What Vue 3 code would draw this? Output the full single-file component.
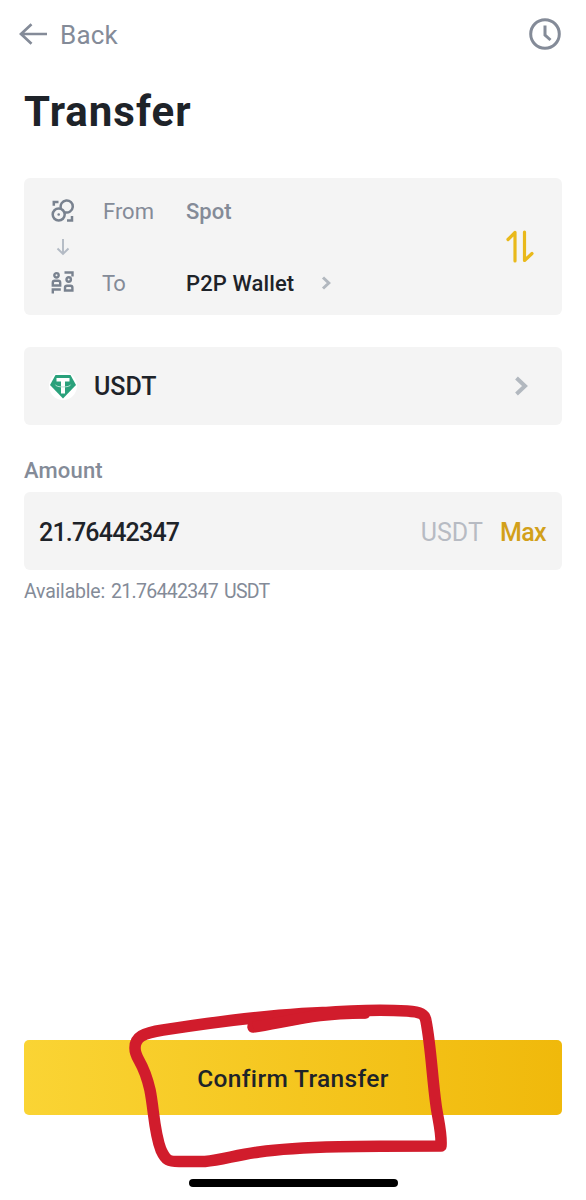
<script setup>
import { ref } from 'vue'

const amount = ref('21.76442347')
const coin = ref('USDT')
</script>

<template>
  <main class="page">
    <header class="top">
      <button class="back">
        <svg width="29" height="24" viewBox="0 0 29 24"><path d="M28 12H2M12.500 2.200L2 12l10.500 9.800" /></svg>
        <span class="t-back">Back</span>
      </button>
      <svg class="clock" width="32" height="32" viewBox="0 0 32 32"><circle cx="16" cy="16" r="14.300" /><path d="M16 7.500V17l5.500 5" /></svg>
    </header>

    <h1><span class="t-title">Transfer</span></h1>

    <section class="card route">
      <div class="accounts">
        <div class="row">
          <svg class="ico" width="24" height="24" viewBox="0 0 24 24">
            <circle cx="7.700" cy="15.500" r="6" /><path d="M9.900 9.200A6.050 6.050 0 1 1 14 13.300M2.800 6.800V3h4.700M21 17v4.500h-5" /><circle class="dot" cx="7.700" cy="15.500" r="1.300" />
          </svg>
          <span class="label t-from">From</span>
          <span class="value muted t-spot">Spot</span>
        </div>
        <svg class="down" width="14" height="18" viewBox="0 0 14 18"><path d="M7 1v15M1.500 10.500L7 16l5.500-5.500" /></svg>
        <div class="row">
          <svg class="ico people" width="24" height="24" viewBox="0 0 24 24">
            <circle cx="5.500" cy="4.300" r="2.200" /><path d="M1.800 14.500v-2.800c0-1.300.8-2 2-2h3.400c1.200 0 2 .7 2 2v2.800zM1.800 22.500v-4h8" />
            <circle cx="17.700" cy="8.500" r="2.200" /><path d="M14 19.500v-2.800c0-1.300.8-2 2-2h3.400c1.200 0 2 .7 2 2v2.800zM13.500 1.500h8v4" />
          </svg>
          <span class="label t-to">To</span>
          <span class="value t-wallet">P2P Wallet</span>
          <svg class="chev small" width="10" height="14" viewBox="0 0 10 14"><path d="M2 1.500L7.800 7 2 12.500" /></svg>
        </div>
      </div>
      <svg class="swap" width="30" height="34" viewBox="0 0 30 34"><path d="M3 9.500l7-7V31M19.500 2v28.500l7.500-7" /></svg>
    </section>

    <section class="card coin">
      <svg width="28" height="28" viewBox="0 0 28 28">
        <circle cx="14" cy="14" r="14" fill="#fff" />
        <path d="M6.500 3h15L27 13 14 26.500 1 13z" fill="#2aa17b" />
        <path d="M7.500 6h13v3.600h-4.500v12h-4V9.600H7.500z" fill="#fff" />
        <path d="M6.500 12.700c0 3 15 3 15 0" fill="none" stroke="#b5ddd0" stroke-width="1" />
      </svg>
      <span class="t-coin">{{ coin }}</span>
      <svg class="chev" width="14" height="20" viewBox="0 0 14 20"><path d="M2.500 2l8.500 8-8.500 8" /></svg>
    </section>

    <div class="field-label"><span class="t-amount">Amount</span></div>
    <section class="card amount">
      <span class="t-number">{{ amount }}</span>
      <span class="unit t-unit">{{ coin }}</span>
      <span class="max t-max">Max</span>
    </section>
    <div class="available">
      <span class="t-available">Available:</span>
      <span class="t-balance">{{ amount }}</span>
      <span class="t-balance-unit">{{ coin }}</span>
    </div>

    <footer>
      <button class="confirm"><span class="t-confirm">Confirm Transfer</span></button>
      <div class="home"></div>
      <svg class="mark" width="330" height="172" viewBox="125 1000 330 172">
        <path d="M253 1027C286 1022 321 1012 365 1013C316 1010 240 1018 163 1030C143 1033 135 1037 135 1048C135 1060 143 1059 150 1090C154 1110 154 1132 161 1150C166 1161 169 1161.500 179 1161.500H205C222 1160 236 1155 259 1152C300 1146 370 1146 441 1146C442 1133 438 1120 436 1105C432 1076 431 1047 426 1021C425 1014 421 1012 407 1011C380 1009.500 350 1010.500 320 1013" />
        <path class="fill" d="M252 1022L320 1009L369 1007V1017L365 1018.500H330L254 1032z" />
      </svg>
    </footer>
  </main>
</template>

<style>
body { background: #fff; }
</style>

<style scoped>
* { box-sizing: border-box; }
.page { width: 586px; height: 1200px; padding: 0 24px; display: flex; flex-direction: column; background: #fff; color: #1e2329; font-family: Roboto, "Noto Sans", sans-serif; overflow: hidden; }
span { white-space: nowrap; }
svg { flex: none; fill: none; }
button { border: 0; background: none; padding: 0; font: inherit; color: inherit; }
.top { height: 68px; display: flex; align-items: center; justify-content: space-between; margin: 0 0 0 -5px; }
.back { display: flex; align-items: center; gap: 12px; color: #848b98; font-size: 26px; line-height: 30px; }
.back svg { stroke: #848b98; stroke-width: 2.700; }
.t-back { padding-top: 2px; letter-spacing: 0.2px; }
.clock { stroke: #848b98; stroke-width: 3; margin-right: 1px; }
h1 { margin: 22px 0 0; height: 44px; font-size: 42px; line-height: 44px; font-weight: 700; letter-spacing: 1px; }
.card { background: #f4f4f4; border-radius: 6px; display: flex; align-items: center; flex: none; }
.route { margin-top: 44px; height: 137px; padding: 0 27px; justify-content: space-between; }
.accounts { display: flex; flex-direction: column; }
.row { display: flex; align-items: center; height: 26px; font-size: 22px; line-height: 26px; }
.row span { padding-top: 2px; }
.ico { stroke: #79828f; stroke-width: 2.500; }
.people { stroke-width: 2.400; }
.ico .dot { fill: #79828f; stroke: none; }
.down { margin: 14px 0 14px 5px; stroke: #b3bac4; stroke-width: 1.900; }
.label { width: 83px; margin-left: 28px; color: #848b98; }
.t-to { text-indent: -1px; letter-spacing: -0.8px; }
.value { font-weight: 500; }
.t-wallet { letter-spacing: 0.1px; }
.muted { color: #848b98; }
.chev { stroke: #b2b8bf; stroke-width: 4; }
.small { margin-left: 27px; stroke-width: 3; }
.swap { stroke: #e9b91b; stroke-width: 3.200; stroke-linecap: round; stroke-linejoin: round; }
.coin { margin-top: 32px; height: 78px; padding: 0 34px 0 25px; font-size: 25px; font-weight: 500; }
.coin .chev { margin-left: auto; }
.t-coin { margin-left: 17px; padding-top: 1px; }
.field-label { height: 26px; margin-top: 33px; font-size: 22px; line-height: 26px; font-weight: 500; color: #848b98; letter-spacing: 0.15px; }
.amount { margin-top: 8px; height: 78px; padding: 2px 16px 0 15px; font-size: 25px; font-weight: 500; }
.t-number { letter-spacing: -0.8px; }
.unit { margin-left: auto; color: #b7bbc3; font-weight: 400; }
.max { margin-left: 17px; color: #d2a01a; letter-spacing: -0.6px; }
.available { display: flex; gap: 6px; height: 24px; margin-top: 10px; font-size: 19.500px; line-height: 24px; color: #848b98; letter-spacing: -0.2px; }
.t-balance { letter-spacing: -0.7px; }
.t-balance-unit { letter-spacing: -0.8px; }
footer { margin-top: auto; height: 160px; position: relative; display: flex; flex-direction: column; align-items: center; }
.confirm { width: 100%; height: 75px; padding-top: 2px; border-radius: 5px; background: linear-gradient(90deg, #fad434, #f0b90b); font-size: 24.500px; font-weight: 500; letter-spacing: 0.35px; }
.home { width: 209px; height: 8px; border-radius: 4px; background: #000; margin-top: 64px; }
.mark { position: absolute; left: 101px; top: -40px; stroke: #d11c2c; stroke-width: 11.500; stroke-linecap: round; stroke-linejoin: round; pointer-events: none; }
.mark .fill { fill: #d11c2c; stroke: none; }
</style>
